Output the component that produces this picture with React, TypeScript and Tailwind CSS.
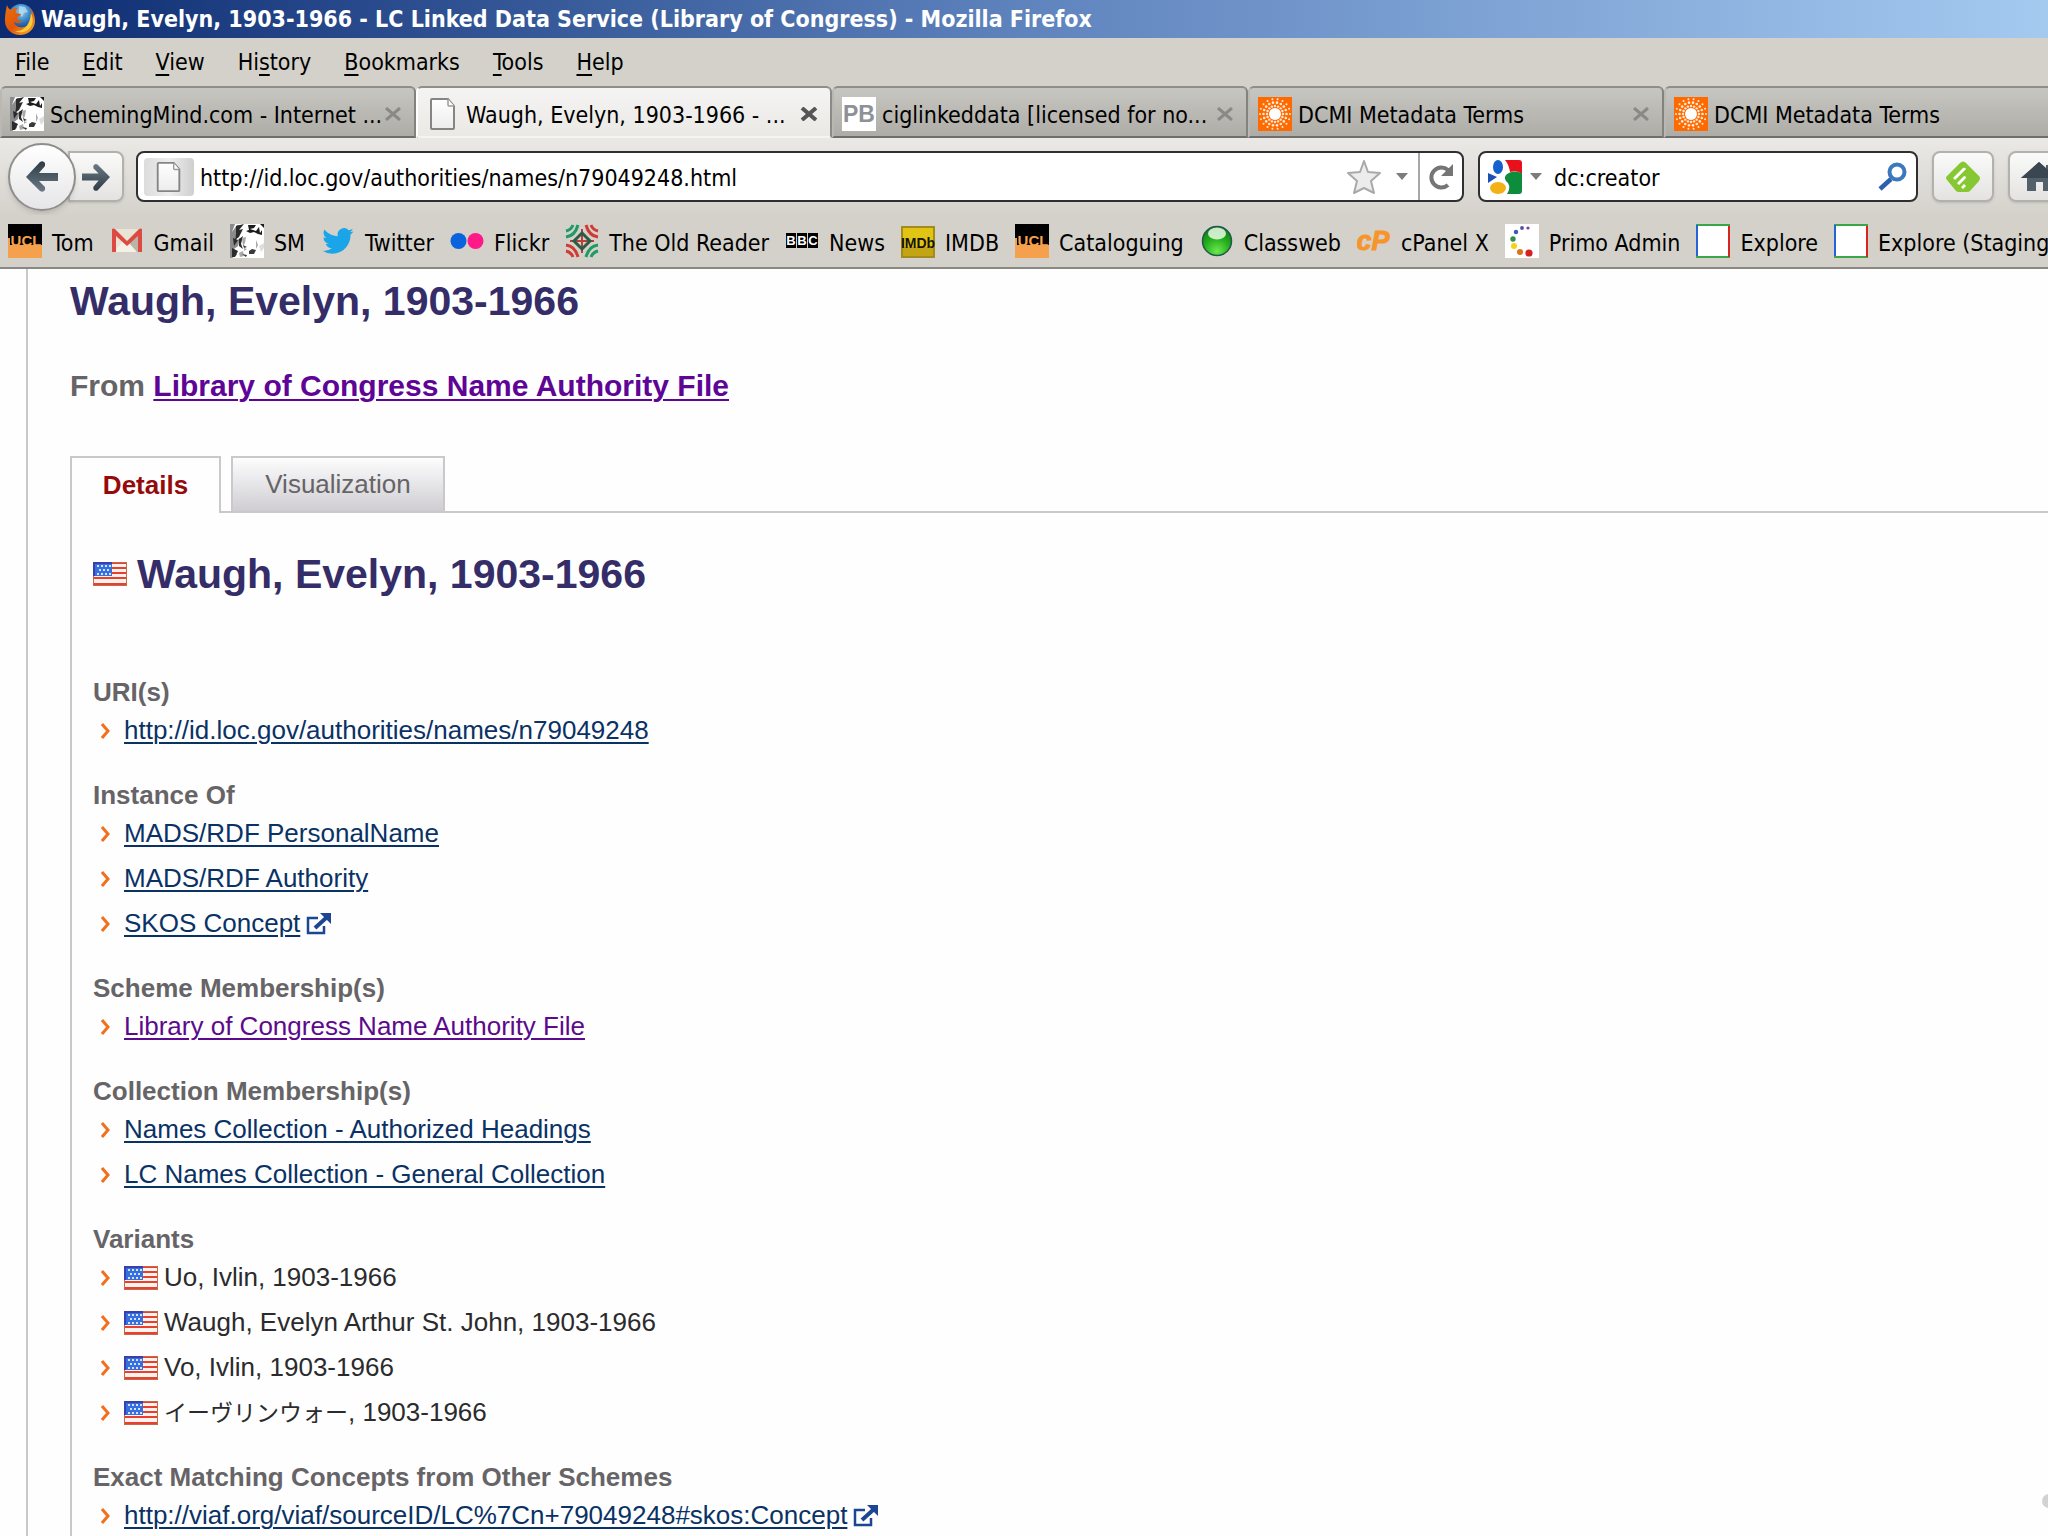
import type { ReactNode } from "react";
import clsx from "clsx";

type IconProps = { className?: string };

function FirefoxIcon({ className }: IconProps) {
  return (
    <svg viewBox="0 0 32 32" className={className} aria-hidden="true">
      <defs>
        <radialGradient id="fx-globe" cx="0.5" cy="0.3" r="0.7">
          <stop offset="0" stopColor="#8fd0f2" />
          <stop offset="0.6" stopColor="#2c77bd" />
          <stop offset="1" stopColor="#173a79" />
        </radialGradient>
        <linearGradient id="fx-tail" x1="0" y1="0" x2="1" y2="1">
          <stop offset="0" stopColor="#e8730c" />
          <stop offset="0.5" stopColor="#e2550a" />
          <stop offset="1" stopColor="#f7b32a" />
        </linearGradient>
      </defs>
      <circle cx="17" cy="14" r="13" fill="url(#fx-globe)" />
      <path d="M15 3l6 1 3 5-4 1-2 4-3-3z" fill="#bfe3f4" opacity="0.7" />
      <path
        d="M3 2c1 3 2 4 4 5 2-2 4-2 7-2-2 2-3 3-2 5l5 1c0 2-3 2-4 4 1 2 2 3 5 3-2 3-6 2-8 1 1 4 5 6 10 5 5-1 8-5 8-10 0-4-1-6-2-9 4 4 5 9 5 13 0 8-7 14-15 14S1 26 1 18C1 11 2 7 3 2z"
        fill="url(#fx-tail)"
      />
      <path d="M27 10c3 6 2 13-3 17-4 3-9 3-13 1 8 1 15-5 16-18z" fill="#fbc93c" />
    </svg>
  );
}

function FaceIcon({ className }: IconProps) {
  return (
    <svg viewBox="0 0 34 34" className={className} aria-hidden="true">
      <rect width="34" height="34" fill="#fff" />
      <path d="M0 0h5l-3 8 5-7h5l-6 10-1 7 5-4-2 8-4 3 3 6-5 3H0z" fill="#8b8b8b" />
      <path d="M6 2l8-2-5 6 4-1-4 8-4 3 1-6zM3 14l5 2-4 6zM9 15l4-3-2 8 2 5-4-3zM2 24l6 3-3 6H2z" fill="#2b2b2b" />
      <path d="M18 1h8l-2 3-4 1 6 2 3-4 1 6 2-3v5l-4-1-4-2-4 1-4-2 3-1zM30 0h4v4z" fill="#1c1c1c" />
      <path d="M12 14l4-1-1 6-2 3zM14 24l3 1-3 2zM9 29l4-2 1 5-4 1zM26 16l2 5-2 4z" fill="#a9a9a9" />
      <path d="M19 27l3-2 4 1-2 4h-5zM13 21l4 2-3 1zM12 30l5 1-1 2z" fill="#3a3a3a" />
      <path d="M29 22l5-3v5l-3 4z" fill="#ddd" />
    </svg>
  );
}

function PageIcon({ className }: IconProps) {
  return (
    <svg viewBox="0 0 28 34" className={className} aria-hidden="true">
      <defs>
        <linearGradient id="page-fill" x1="0" y1="0" x2="0" y2="1">
          <stop offset="0" stopColor="#fff" />
          <stop offset="1" stopColor="#ececec" />
        </linearGradient>
      </defs>
      <path
        d="M3 2h16l6 7v22q0 1-1 1H3q-1 0-1-1V3q0-1 1-1z"
        fill="url(#page-fill)"
        stroke="#858585"
        strokeWidth="2"
      />
      <path d="M19 2v6q0 1 1 1h5" fill="#fff" stroke="#9a9a9a" strokeWidth="1.5" />
    </svg>
  );
}

function PbIcon({ className }: IconProps) {
  return (
    <svg viewBox="0 0 34 34" className={className} aria-hidden="true">
      <rect width="34" height="34" fill="#fff" />
      <text x="17" y="25" textAnchor="middle" fontFamily="Liberation Sans" fontWeight="700" fontSize="23" fill="#8e9196">
        PB
      </text>
    </svg>
  );
}

const DCMI_RINGS = [
  { r: 8, n: 16, s: 1.2 },
  { r: 11.5, n: 18, s: 1.3 },
  { r: 15, n: 18, s: 1 },
];

function DcmiIcon({ className }: IconProps) {
  return (
    <svg viewBox="0 0 34 34" className={className} aria-hidden="true">
      <rect width="34" height="34" fill="#ff6a00" />
      <circle cx="17" cy="17" r="6" fill="#fff" />
      {DCMI_RINGS.map(({ r, n, s }) =>
        Array.from({ length: n }, (_, i) => {
          const a = (i / n) * Math.PI * 2;
          return <circle key={`${r}-${i}`} cx={17 + r * Math.cos(a)} cy={17 + r * Math.sin(a)} r={s} fill="#ffe9d6" />;
        }),
      )}
    </svg>
  );
}

function UclIcon({ className }: IconProps) {
  return (
    <svg viewBox="0 0 34 34" className={className} aria-hidden="true">
      <rect width="34" height="34" fill="#000" />
      <text x="18" y="22" textAnchor="middle" fontFamily="Liberation Sans" fontWeight="700" fontSize="15" fill="#f5a04c">
        UCL
      </text>
      <path d="M0 21h34v13H0zM0 14h2v7H0z" fill="#f5a04c" />
    </svg>
  );
}

function GmailIcon({ className }: IconProps) {
  return (
    <svg viewBox="0 0 34 34" className={className} aria-hidden="true">
      <path d="M4 5h26v23H4z" fill="#eae4d6" />
      <path d="M4 28l10-12 3 3 4-3 9 12z" fill="#f6f1e6" />
      <path d="M19 19l11-9v18h-3z" fill="#b9b3a8" />
      <path d="M2 5q1-1 3 0l12 12L29 5q2-1 3 0v23h-4V12L17 22 6 12v16H2z" fill="#dc4a42" />
    </svg>
  );
}

function TwitterIcon({ className }: IconProps) {
  return (
    <svg viewBox="-1 -1 26 26" className={className} aria-hidden="true">
      <path
        fill="#1aa5e8"
        d="M23.95 4.57a10 10 0 0 1-2.82.77 4.96 4.96 0 0 0 2.16-2.72c-.95.55-2 .95-3.13 1.18a4.92 4.92 0 0 0-8.38 4.48C7.69 8.1 4.07 6.13 1.64 3.16a4.9 4.9 0 0 0 1.52 6.57 4.9 4.9 0 0 1-2.23-.61v.06a4.92 4.92 0 0 0 3.95 4.83 5 5 0 0 1-2.21.08 4.94 4.94 0 0 0 4.6 3.42A9.87 9.87 0 0 1 0 19.54a13.99 13.99 0 0 0 7.55 2.21c9.05 0 14-7.5 14-13.98 0-.21 0-.42-.02-.63a9.94 9.94 0 0 0 2.46-2.55z"
      />
    </svg>
  );
}

function FlickrIcon({ className }: IconProps) {
  return (
    <svg viewBox="0 0 34 34" className={className} aria-hidden="true">
      <circle cx="8.5" cy="17" r="8" fill="#0a62dc" />
      <circle cx="25.5" cy="17" r="8" fill="#ff1a87" />
    </svg>
  );
}

function OldReaderIcon({ className }: IconProps) {
  return (
    <svg viewBox="0 0 34 34" className={className} fill="none" strokeWidth="3" aria-hidden="true">
      <g stroke="#1f9a64">
        <path d="M1 13Q10 12 13 1M1 7Q6 6 8 1" />
        <path d="M33 21Q24 22 21 33M33 27Q28 28 26 33" />
      </g>
      <g stroke="#d23a35">
        <path d="M21 1Q24 12 33 13M26 1Q28 6 33 7" />
        <path d="M13 33Q10 22 1 21M8 33Q6 28 1 27" />
      </g>
      <path d="M17 5v24M5 17h24" stroke="#b9403a" strokeWidth="2" />
      <path d="M17 9l8 8-8 8-8-8z" stroke="#2d5a44" />
    </svg>
  );
}

function BbcIcon({ className }: IconProps) {
  return (
    <svg viewBox="0 0 34 34" className={className} aria-hidden="true">
      {["B", "B", "C"].map((letter, i) => (
        <g key={i}>
          <rect x={i * 11 + 1} y="9" width="10" height="15" fill="#000" />
          <text x={i * 11 + 6} y="21" textAnchor="middle" fontFamily="Liberation Sans" fontWeight="700" fontSize="13" fill="#fff">
            {letter}
          </text>
        </g>
      ))}
    </svg>
  );
}

function ImdbIcon({ className }: IconProps) {
  return (
    <svg viewBox="0 0 34 34" className={className} aria-hidden="true">
      <rect x="1" y="3" width="32" height="30" fill="#e2c514" stroke="#a48c1c" strokeWidth="2" />
      <rect x="2" y="23" width="30" height="9" fill="#c3a415" />
      <text x="17" y="24" textAnchor="middle" fontFamily="Liberation Sans" fontWeight="700" fontSize="14" fill="#15130a">
        IMDb
      </text>
    </svg>
  );
}

function GreenBallIcon({ className }: IconProps) {
  return (
    <svg viewBox="0 0 34 34" className={className} aria-hidden="true">
      <defs>
        <radialGradient id="ball" cx="0.5" cy="0.85" r="0.8">
          <stop offset="0" stopColor="#6be84e" />
          <stop offset="0.6" stopColor="#21ab18" />
          <stop offset="1" stopColor="#137a1d" />
        </radialGradient>
      </defs>
      <circle cx="17" cy="17" r="14.5" fill="url(#ball)" stroke="#1d5a4c" strokeWidth="1.5" />
      <ellipse cx="17" cy="9.5" rx="9" ry="6" fill="#eafbe6" opacity="0.85" />
    </svg>
  );
}

function CpanelIcon({ className }: IconProps) {
  return (
    <svg viewBox="0 0 34 34" className={className} aria-hidden="true">
      <text
        x="16"
        y="26"
        textAnchor="middle"
        fontFamily="Liberation Sans"
        fontWeight="700"
        fontStyle="italic"
        fontSize="27"
        fill="#f7952b"
        stroke="#f7952b"
      >
        cP
      </text>
    </svg>
  );
}

const PRIMO_DOTS: [number, number, number, string][] = [
  [23, 4, 1.6, "#7a3fa0"],
  [17, 4, 1.9, "#5a4aa6"],
  [11, 8, 2.2, "#3c5bb0"],
  [8, 15, 2.7, "#2f8f4a"],
  [9, 22, 3, "#f5d312"],
  [15, 28, 3, "#e0701a"],
  [24, 29, 3.6, "#d61f1f"],
];

function PrimoIcon({ className }: IconProps) {
  return (
    <svg viewBox="0 0 34 34" className={className} aria-hidden="true">
      <rect width="34" height="34" fill="#fff" />
      {PRIMO_DOTS.map(([cx, cy, r, fill]) => (
        <circle key={fill} cx={cx} cy={cy} r={r} fill={fill} />
      ))}
    </svg>
  );
}

function ExploreIcon({ className }: IconProps) {
  return (
    <svg viewBox="0 0 34 34" className={className} aria-hidden="true">
      <rect width="34" height="34" fill="#fff" />
      <path d="M0 0h34v2H0zM0 32h34v2H0z" fill="#3aa648" />
      <path d="M0 1h2v31H0z" fill="#2463d8" />
      <path d="M32 2h2v31h-2z" fill="#d8231f" />
    </svg>
  );
}

function GoogleIcon({ className }: IconProps) {
  return (
    <svg viewBox="0 0 34 34" className={className} aria-hidden="true">
      <path d="M17 0h14q3 0 3 3v11q-4-4-12-2-1-7-5-12z" fill="#e8101a" />
      <path d="M34 13v18q0 3-3 3H19q4-6 1-11-5-4-2-8 6-6 16-2z" fill="#0d8c3c" />
      <ellipse cx="10" cy="7" rx="5" ry="7" fill="#1460cc" />
      <path d="M0 13l9 4-9 6z" fill="#1c50b4" />
      <ellipse cx="10" cy="28" rx="8" ry="6" fill="#f2b117" />
    </svg>
  );
}

function ArrowIcon({ className }: IconProps) {
  return (
    <svg viewBox="0 0 32 32" className={className} aria-hidden="true">
      <defs>
        <linearGradient id="arrow" x1="0" y1="0" x2="0" y2="1">
          <stop offset="0" stopColor="#2e3b47" />
          <stop offset="1" stopColor="#6b7a86" />
        </linearGradient>
      </defs>
      <path d="M14 1q3-2 5 1v3l-6 7h19v8H13l6 6v3q-2 3-5 1L0 16z" fill="url(#arrow)" />
    </svg>
  );
}

function StarIcon({ className }: IconProps) {
  return (
    <svg viewBox="0 0 36 36" className={className} aria-hidden="true">
      <path
        d="M18 2l4 11 12 1-9 8 3 12-10-5-10 5 3-12-9-8 12-1z"
        fill="#ececec"
        stroke="#a9a9a9"
        strokeWidth="2"
        strokeLinejoin="round"
      />
    </svg>
  );
}

function ReloadIcon({ className }: IconProps) {
  return (
    <svg viewBox="0 0 26 26" className={className} aria-hidden="true">
      <path d="M20 21A10 10 0 1 1 20 6" fill="none" stroke="#757575" strokeWidth="4" />
      <path d="M25 0v12H13z" fill="#757575" />
    </svg>
  );
}

function CaretIcon({ className }: IconProps) {
  return (
    <svg viewBox="0 0 12 8" className={className} aria-hidden="true">
      <path d="M0 0h12L6 7z" fill="#7c7c7c" />
    </svg>
  );
}

function SearchIcon({ className }: IconProps) {
  return (
    <svg viewBox="0 0 30 30" className={className} fill="none" aria-hidden="true">
      <path d="M2 27L13 17" stroke="#2d5fae" strokeWidth="4.5" />
      <circle cx="19" cy="10" r="7.5" stroke="#3b78bd" strokeWidth="4" fill="#fff" />
    </svg>
  );
}

function FeedlyIcon({ className }: IconProps) {
  return (
    <svg viewBox="0 0 36 32" className={className} aria-hidden="true">
      <path d="M15 2q3-3 6 0l13 13q2 2 0 5L25 30q-1 1-3 1h-8q-2 0-3-1L2 19q-2-2 0-4z" fill="#86c832" />
      <path d="M8 17l10-10q2-1 3 1L10 19zM12 22l7-7q2 0 2 2l-7 7zM16 26l3-3 2 2-3 3z" fill="#fff" />
    </svg>
  );
}

function HomeIcon({ className }: IconProps) {
  return (
    <svg viewBox="0 0 36 30" className={className} aria-hidden="true">
      <path d="M18 0l7 6V3h4v7l7 6h-5v13h-9v-9h-7v9H6V16H0z" fill="#52606b" />
      <path d="M18 0l18 16H0z" fill="#3a4650" />
    </svg>
  );
}

function ExternalIcon({ className }: IconProps) {
  return (
    <svg viewBox="0 0 26 24" className={className} fill="none" stroke="#1c4594" aria-hidden="true">
      <path d="M12 6H2v15h16v-7" strokeWidth="2.5" />
      <path d="M9 16L20 6" strokeWidth="4" />
      <path d="M14 1h11v11z" fill="#1c4594" stroke="none" />
    </svg>
  );
}

function FlagIcon({ className }: IconProps) {
  return (
    <svg viewBox="0 0 34 24" className={className} preserveAspectRatio="none" role="img" aria-label="en">
      <rect width="34" height="24" fill="#fdf3ee" />
      <path d="M0 0h34v2H0zM0 5h34v2H0zM0 10h34v2H0zM0 15h34v2H0zM0 21h34v3H0z" fill="#e8402f" />
      <path d="M0 0h34v24H0z" fill="none" stroke="#c4694a" strokeWidth="2" />
      <rect width="19" height="14" fill="#3470e0" />
      <path d="M0 1h19M1 0v14" stroke="#3a3fae" strokeWidth="2" />
      <path d="M4 4h14M6 8h12M4 12h14" stroke="#d5e2fa" strokeWidth="2" strokeDasharray="2 2" />
    </svg>
  );
}

function ChevronIcon({ className }: IconProps) {
  return (
    <svg viewBox="0 0 10 16" className={className} fill="none" stroke="#f2701d" strokeWidth="3" aria-hidden="true">
      <path d="M1 1l6 7-6 7" />
    </svg>
  );
}

const MENUS: [string, string, string][] = [
  ["", "F", "ile"],
  ["", "E", "dit"],
  ["", "V", "iew"],
  ["Hi", "s", "tory"],
  ["", "B", "ookmarks"],
  ["", "T", "ools"],
  ["", "H", "elp"],
];

const TABS = [
  { title: "SchemingMind.com - Internet ...", icon: FaceIcon },
  { title: "Waugh, Evelyn, 1903-1966 - ...", icon: PageIcon, active: true },
  { title: "ciglinkeddata [licensed for no...", icon: PbIcon },
  { title: "DCMI Metadata Terms", icon: DcmiIcon },
  { title: "DCMI Metadata Terms", icon: DcmiIcon },
];

const BOOKMARKS = [
  { label: "Tom", icon: UclIcon },
  { label: "Gmail", icon: GmailIcon },
  { label: "SM", icon: FaceIcon },
  { label: "Twitter", icon: TwitterIcon },
  { label: "Flickr", icon: FlickrIcon },
  { label: "The Old Reader", icon: OldReaderIcon },
  { label: "News", icon: BbcIcon },
  { label: "IMDB", icon: ImdbIcon },
  { label: "Cataloguing", icon: UclIcon },
  { label: "Classweb", icon: GreenBallIcon },
  { label: "cPanel X", icon: CpanelIcon },
  { label: "Primo Admin", icon: PrimoIcon },
  { label: "Explore", icon: ExploreIcon },
  { label: "Explore (Staging", icon: ExploreIcon },
];

function TitleBar() {
  return (
    <div className="flex h-[38px] shrink-0 items-center gap-[5px] bg-linear-to-r from-[#0c2a70] via-[#5f83bd] to-[#a5caf0] pl-1 whitespace-nowrap">
      <FirefoxIcon className="size-8" />
      <span className="text-[23px] font-bold text-white">
        Waugh, Evelyn, 1903-1966 - LC Linked Data Service (Library of Congress) - Mozilla Firefox
      </span>
    </div>
  );
}

function MenuBar() {
  return (
    <nav className="flex h-12 shrink-0 items-center gap-[33px] bg-[#d3d1c9] pl-[15px]">
      {MENUS.map(([before, key, after]) => (
        <button key={before + key + after} type="button">
          {before}
          <span className="underline decoration-2 underline-offset-4">{key}</span>
          {after}
        </button>
      ))}
    </nav>
  );
}

function TabStrip() {
  return (
    <div className="flex h-[52px] shrink-0 overflow-hidden bg-[#d3d1c9]">
      {TABS.map(({ title, icon: Icon, active }, i) => (
        <div
          key={i}
          className={clsx(
            "flex w-[416px] shrink-0 items-center rounded-t-md border-2 pt-[3px] pr-3 pl-2",
            active
              ? "border-t-[#8f8e8a] border-r-[#8b8a86] border-b-transparent border-l-white bg-linear-to-b from-[#f5f4f2] to-[#ebe9e6]"
              : "border-t-[#8f8e8a] border-r-[#83827e] border-b-[#6f6e6a] border-l-[#b9b8b3] bg-linear-to-b from-[#c8c6c0] to-[#aeaca6]",
          )}
        >
          <button type="button" className="flex min-w-0 flex-1 items-center gap-[6px] whitespace-nowrap">
            <Icon className="size-[34px] shrink-0" />
            <span className="pt-[3px]">{title}</span>
          </button>
          <button type="button" aria-label={`Close ${title}`} className="shrink-0">
            <svg viewBox="0 0 18 14" className="h-[14px] w-[18px]" aria-hidden="true">
              <path d="M2 1l14 12M16 1L2 13" stroke={active ? "#555" : "#8a8985"} strokeWidth={active ? 4 : 3} />
            </svg>
          </button>
        </div>
      ))}
    </div>
  );
}

const toolButton =
  "flex h-[51px] w-[62px] shrink-0 items-center justify-center rounded-lg border-2 border-[#b3b1ac] bg-linear-to-b from-[#fafafa] to-[#e4e3e1] shadow-sm";

function NavBar() {
  return (
    <div className="flex h-[77px] shrink-0 items-center overflow-hidden bg-linear-to-b from-[#ebe9e6] to-[#d5d2cc] pl-2">
      <button
        type="button"
        aria-label="Back"
        className="z-10 flex size-[68px] shrink-0 items-center justify-center rounded-full border-2 border-[#8f8e8c] bg-linear-to-b from-white to-[#e6e6e8] shadow-md"
      >
        <ArrowIcon className="size-8" />
      </button>
      <button
        type="button"
        aria-label="Forward"
        className="-ml-2 flex h-[51px] w-14 shrink-0 items-center justify-center rounded-r-lg border-2 border-[#b3b1ac] bg-linear-to-b from-[#fafafa] to-[#e4e3e1] shadow-sm"
      >
        <ArrowIcon className="size-7 rotate-180" />
      </button>
      <div className="ml-3 flex h-[51px] min-w-0 flex-1 items-center rounded-lg border-2 border-[#2f2f2f] bg-white pl-[6px]">
        <span className="flex h-[38px] w-[50px] shrink-0 items-center justify-center rounded-sm bg-linear-to-r from-[#dcdcdc] via-[#eeeeee] to-[#cfcfcf]">
          <PageIcon className="h-8 w-7" />
        </span>
        <input
          aria-label="Address"
          className="ml-[6px] min-w-0 flex-1 bg-transparent pt-1 outline-none"
          defaultValue="http://id.loc.gov/authorities/names/n79049248.html"
        />
        <button type="button" aria-label="Bookmark this page">
          <StarIcon className="size-9" />
        </button>
        <button type="button" aria-label="Show history" className="mr-[10px] ml-[14px]">
          <CaretIcon className="h-2 w-3" />
        </button>
        <button
          type="button"
          aria-label="Reload"
          className="flex h-full w-11 items-center justify-center border-l-2 border-[#a8a8a8]"
        >
          <ReloadIcon className="size-[26px]" />
        </button>
      </div>
      <div className="ml-[14px] flex h-[51px] w-[440px] shrink-0 items-center rounded-lg border-2 border-[#2f2f2f] bg-white pr-2 pl-2">
        <GoogleIcon className="size-[34px] shrink-0" />
        <button type="button" aria-label="Choose search engine" className="ml-2">
          <CaretIcon className="h-2 w-3" />
        </button>
        <input
          aria-label="Search"
          className="ml-3 min-w-0 flex-1 bg-transparent pt-1 outline-none"
          defaultValue="dc:creator"
        />
        <button type="button" aria-label="Go">
          <SearchIcon className="size-[30px]" />
        </button>
      </div>
      <button type="button" aria-label="Feedly" className={clsx(toolButton, "ml-[14px]")}>
        <FeedlyIcon className="h-8 w-9" />
      </button>
      <button type="button" aria-label="Home" className={clsx(toolButton, "-mr-[22px] ml-[14px]")}>
        <HomeIcon className="h-[30px] w-9" />
      </button>
    </div>
  );
}

function BookmarksBar() {
  return (
    <div className="flex h-[54px] shrink-0 items-center gap-4 overflow-hidden border-b-2 border-[#8a8883] bg-[#d4d1ca] pl-2">
      {BOOKMARKS.map(({ label, icon: Icon }) => (
        <a key={label} href="#" className="flex shrink-0 items-center gap-[10px] whitespace-nowrap">
          <Icon className="size-[34px] shrink-0" />
          <span className="pt-1">{label}</span>
        </a>
      ))}
    </div>
  );
}

function Section({ title, children }: { title: string; children: ReactNode }) {
  return (
    <section className="pb-[27px]">
      <h3 className="leading-[31px] font-bold text-[#666467]">{title}</h3>
      <ul>{children}</ul>
    </section>
  );
}

function Item({ children }: { children: ReactNode }) {
  return (
    <li className="flex h-[45px] items-center pl-2 leading-[45px] whitespace-nowrap">
      <ChevronIcon className="mr-[13px] h-4 w-[10px]" />
      {children}
    </li>
  );
}

function DataLink({ children, visited, external }: { children: string; visited?: boolean; external?: boolean }) {
  return (
    <a href="#" className="flex items-center gap-[6px]">
      <span
        className={clsx(
          "underline decoration-2 underline-offset-3",
          visited ? "text-[#5c0a8c]" : "text-[#0a3265]",
        )}
      >
        {children}
      </span>
      {external && <ExternalIcon className="h-6 w-[26px]" />}
    </a>
  );
}

function Variant({ children }: { children: ReactNode }) {
  return (
    <Item>
      <FlagIcon className="mr-[6px] h-6 w-[34px]" />
      <span>{children}</span>
    </Item>
  );
}

function RecordPage() {
  return (
    <main className="relative min-h-0 flex-1 overflow-hidden bg-[#fefefe] pl-[26px] font-['Liberation_Sans','Noto_Sans_CJK_JP',sans-serif] text-[26px] text-[#2b2b2d]">
      <div className="border-l-2 border-[#c9c8cb] pl-[42px]">
        <h1 className="pt-[7px] text-[41px] leading-[50px] font-bold text-[#342d68]">Waugh, Evelyn, 1903-1966</h1>
        <p className="mt-[42px] text-[30px] leading-9 font-bold text-[#666467]">
          From{" "}
          <a href="#" className="text-[#5f0596] underline decoration-2 underline-offset-3">
            Library of Congress Name Authority File
          </a>
        </p>
        <div className="mt-[52px] flex items-end gap-[10px]" role="tablist">
          <button
            type="button"
            role="tab"
            aria-selected="true"
            className="z-10 -mb-[2px] h-[57px] w-[151px] border-2 border-b-0 border-[#c9c8cb] bg-[#fefefe] font-bold text-[#960a0c]"
          >
            Details
          </button>
          <button
            type="button"
            role="tab"
            aria-selected="false"
            className="h-[55px] w-[214px] border-2 border-b-0 border-[#c9c8cb] bg-linear-to-b from-[#fdfdfd] to-[#cfcdd2] text-[#666467]"
          >
            Visualization
          </button>
        </div>
        <div className="border-t-2 border-l-2 border-[#c9c8cb] pt-9 pl-[21px]" role="tabpanel">
          <h2 className="mb-[78px] flex items-center gap-[10px] text-[41px] leading-[50px] font-bold text-[#342d68]">
            <FlagIcon className="h-6 w-[34px]" />
            Waugh, Evelyn, 1903-1966
          </h2>
          <Section title="URI(s)">
            <Item>
              <DataLink>http://id.loc.gov/authorities/names/n79049248</DataLink>
            </Item>
          </Section>
          <Section title="Instance Of">
            <Item>
              <DataLink>MADS/RDF PersonalName</DataLink>
            </Item>
            <Item>
              <DataLink>MADS/RDF Authority</DataLink>
            </Item>
            <Item>
              <DataLink external>SKOS Concept</DataLink>
            </Item>
          </Section>
          <Section title="Scheme Membership(s)">
            <Item>
              <DataLink visited>Library of Congress Name Authority File</DataLink>
            </Item>
          </Section>
          <Section title="Collection Membership(s)">
            <Item>
              <DataLink>Names Collection - Authorized Headings</DataLink>
            </Item>
            <Item>
              <DataLink>LC Names Collection - General Collection</DataLink>
            </Item>
          </Section>
          <Section title="Variants">
            <Variant>Uo, Ivlin, 1903-1966</Variant>
            <Variant>Waugh, Evelyn Arthur St. John, 1903-1966</Variant>
            <Variant>Vo, Ivlin, 1903-1966</Variant>
            <Variant>
              <span className="text-[23px]">イーヴリンウォー</span>, 1903-1966
            </Variant>
          </Section>
          <Section title="Exact Matching Concepts from Other Schemes">
            <Item>
              <DataLink external>http://viaf.org/viaf/sourceID/LC%7Cn+79049248#skos:Concept</DataLink>
            </Item>
          </Section>
        </div>
      </div>
      <div className="absolute -right-2 bottom-7 size-[14px] rounded-full bg-[#d2d2d2]" />
    </main>
  );
}

export default function App() {
  return (
    <div className="flex h-screen flex-col overflow-hidden font-['DejaVu_Sans_Condensed','DejaVu_Sans',sans-serif] text-[23px] text-black">
      <TitleBar />
      <MenuBar />
      <TabStrip />
      <NavBar />
      <BookmarksBar />
      <RecordPage />
    </div>
  );
}
